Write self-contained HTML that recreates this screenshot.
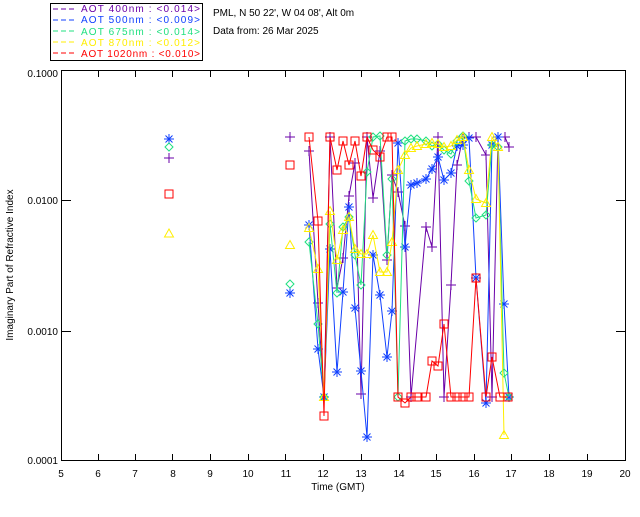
<!DOCTYPE html>
<html><head><style>
body{margin:0;background:#fff;}
svg text{font-family:"Liberation Sans",sans-serif;font-size:10px;}
</style></head><body>
<svg width="640" height="512" xmlns="http://www.w3.org/2000/svg">
<defs>
<marker id="mp" markerUnits="userSpaceOnUse" markerWidth="12" markerHeight="12" refX="6" refY="6"><path d="M1 6H11M6 1V11" stroke="#6a00a8" stroke-width="1" fill="none"/></marker>
<marker id="mb" markerUnits="userSpaceOnUse" markerWidth="12" markerHeight="12" refX="6" refY="6"><path d="M1 6H11M6 1V11M2.5 2.5L9.5 9.5M9.5 2.5L2.5 9.5" stroke="#1040ff" stroke-width="1" fill="none"/></marker>
<marker id="mg" markerUnits="userSpaceOnUse" markerWidth="12" markerHeight="12" refX="6" refY="6"><path d="M6 2L10 6L6 10L2 6Z" stroke="#20e080" stroke-width="1" fill="none"/></marker>
<marker id="my" markerUnits="userSpaceOnUse" markerWidth="12" markerHeight="12" refX="6" refY="6"><path d="M6 1.5L10.5 9.5H1.5Z" stroke="#ffee00" stroke-width="1" fill="none"/></marker>
<marker id="mr" markerUnits="userSpaceOnUse" markerWidth="12" markerHeight="12" refX="6" refY="6"><rect x="2" y="2" width="8" height="8" stroke="#ff0000" stroke-width="1" fill="none"/></marker>
</defs>
<!-- legend -->
<rect x="50.5" y="3.5" width="152" height="57" fill="none" stroke="#000"/>
<g font-size="10">
<line x1="53" y1="9" x2="75" y2="9" stroke="#6a00a8" stroke-dasharray="5,3"/><text x="81" y="12" fill="#6a00a8" textLength="119">AOT  400nm : &lt;0.014&gt;</text>
<line x1="53" y1="20" x2="75" y2="20" stroke="#1040ff" stroke-dasharray="5,3"/><text x="81" y="23" fill="#1040ff" textLength="119">AOT  500nm : &lt;0.009&gt;</text>
<line x1="53" y1="31" x2="75" y2="31" stroke="#20e080" stroke-dasharray="5,3"/><text x="81" y="35" fill="#20e080" textLength="119">AOT  675nm : &lt;0.014&gt;</text>
<line x1="53" y1="42" x2="75" y2="42" stroke="#ffee00" stroke-dasharray="5,3"/><text x="81" y="46" fill="#ffee00" textLength="119">AOT  870nm : &lt;0.012&gt;</text>
<line x1="53" y1="53" x2="75" y2="53" stroke="#ff0000" stroke-dasharray="5,3"/><text x="81" y="57" fill="#ff0000" textLength="119">AOT 1020nm : &lt;0.010&gt;</text>
</g>
<text x="213" y="16">PML, N 50 22', W 04 08', Alt 0m</text>
<text x="213" y="34">Data from: 26 Mar 2025</text>
<!-- axes -->
<rect x="61.5" y="70.5" width="564" height="390" fill="none" stroke="#000"/>
<g stroke="#000">
<path d="M98.5 460v-6M135.5 460v-6M172.5 460v-6M210.5 460v-6M248.5 460v-6M285.5 460v-6M323.5 460v-6M361.5 460v-6M399.5 460v-6M436.5 460v-6M474.5 460v-6M511.5 460v-6M549.5 460v-6M587.5 460v-6"/>
<path d="M98.5 71v6M135.5 71v6M172.5 71v6M210.5 71v6M248.5 71v6M285.5 71v6M323.5 71v6M361.5 71v6M399.5 71v6M436.5 71v6M474.5 71v6M511.5 71v6M549.5 71v6M587.5 71v6"/>
<path d="M61 200.5h10M61 331.5h10M616 200.5h10M616 331.5h10"/>
</g>
<g text-anchor="middle">
<text x="61" y="477">5</text><text x="98" y="477">6</text><text x="135" y="477">7</text><text x="173" y="477">8</text><text x="210" y="477">9</text><text x="248" y="477">10</text><text x="286" y="477">11</text><text x="323" y="477">12</text><text x="361" y="477">13</text><text x="399" y="477">14</text><text x="436" y="477">15</text><text x="474" y="477">16</text><text x="511" y="477">17</text><text x="549" y="477">18</text><text x="587" y="477">19</text><text x="625" y="477">20</text>
<text x="338" y="490">Time (GMT)</text>
</g>
<g text-anchor="end">
<text x="58" y="77">0.1000</text><text x="58" y="204">0.0100</text><text x="58" y="335">0.0010</text><text x="58" y="464">0.0001</text>
</g>
<text transform="translate(13,265) rotate(-90)" text-anchor="middle">Imaginary Part of Refractive Index</text>
<!-- data -->
<g fill="none" stroke-width="1">
<polyline stroke="#6a00a8" marker-start="url(#mp)" marker-mid="url(#mp)" marker-end="url(#mp)" points="309,151 318,303 324,397 330,137 337,288 343,258 349,196 355,163 361,394 367,137 373,198 380,151 387,260 392,175 398,192 405,226 411,397 426,227 432,247 438,137 444,397 451,285 457,165 463,137 469,137 476,137 486,155 492,397 498,137 505,137 509,147"/>
<polyline stroke="#1040ff" marker-start="url(#mb)" marker-mid="url(#mb)" marker-end="url(#mb)" points="309,225 318,349 324,397 330,249 337,372 343,292 349,207 355,308 361,371 367,437 373,255 380,295 387,357 392,311 398,143 405,247 411,185 417,183 426,179 432,169 438,157 444,180 451,173 457,146 463,145 469,138 476,278 486,403 492,145 498,137 504,304 509,397"/>
<polyline stroke="#20e080" marker-start="url(#mg)" marker-mid="url(#mg)" marker-end="url(#mg)" points="309,242 318,324 324,397 330,224 337,293 343,227 349,217 355,255 361,285 367,172 373,137 380,136 387,255 392,179 398,397 405,141 411,139 417,139 426,141 432,146 438,144 444,150 451,154 457,141 463,136 469,181 476,218 486,215 492,145 498,147 504,373 509,397"/>
<polyline stroke="#ffee00" marker-start="url(#my)" marker-mid="url(#my)" marker-end="url(#my)" points="309,228 318,269 324,397 330,211 337,260 343,230 349,217 355,249 361,254 367,254 373,235 380,272 387,272 392,242 398,170 405,155 411,148 417,146 426,144 432,143 438,144 444,147 451,146 457,140 463,137 469,170 476,199 486,203 492,137 498,147 504,435"/>
<polyline stroke="#ff0000" marker-start="url(#mr)" marker-mid="url(#mr)" marker-end="url(#mr)" points="309,137 318,221 324,416 330,137 337,170 343,141 349,165 355,141 361,176 367,137 373,150 380,157 387,137 392,137 398,397 405,403 411,397 417,397 426,397 432,361 438,366 444,324 451,397 457,397 463,397 469,397 476,278 486,397 492,357 500,397 508,397"/>
</g>
<!-- isolated points -->
<g fill="none" stroke-width="1">
<path stroke="#6a00a8" d="M164 158H174M169 153V163M285 137H295M290 132V142"/>
<path stroke="#1040ff" d="M164 139H174M169 134V144M165.5 135.5L172.5 142.5M172.5 135.5L165.5 142.5M285 293H295M290 288V298M286.5 289.5L293.5 296.5M293.5 289.5L286.5 296.5"/>
<path stroke="#20e080" d="M169 143L173 147L169 151L165 147ZM290 280L294 284L290 288L286 284Z"/>
<path stroke="#ffee00" d="M169 229L173.5 237H164.5ZM290 240.5L294.5 248.5H285.5Z"/>
<path stroke="#ff0000" d="M165 190h8v8h-8zM286 161h8v8h-8z"/>
</g>
</svg>
</body></html>
